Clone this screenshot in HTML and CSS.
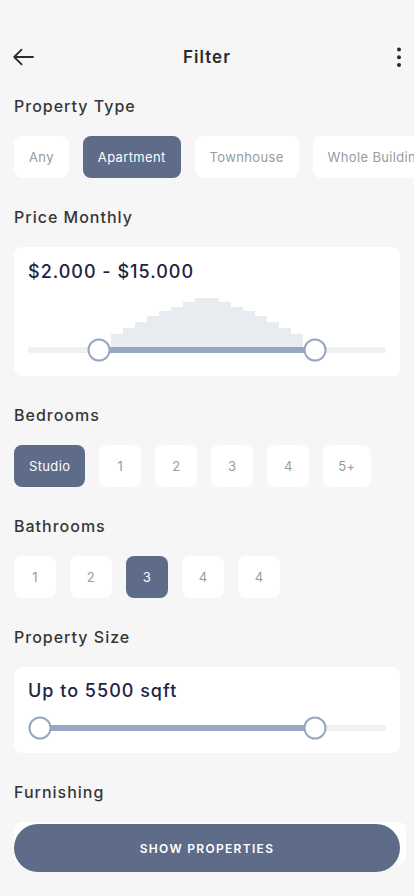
FILE: index.html
```html
<!DOCTYPE html>
<html lang="en">
<head>
<meta charset="utf-8">
<meta name="viewport" content="width=device-width, initial-scale=1">
<title>Filter</title>
<link rel="stylesheet" href="styles.css">
</head>
<body>
<div class="screen">
  <header class="topbar">
    <button class="icon-btn" aria-label="Back">
      <svg width="24" height="24" viewBox="0 0 24 24"><path d="M21 12H2.4M9.6 4.6L2.2 12l7.4 7.4" fill="none" stroke="#2b2b2b" stroke-width="1.8" stroke-linecap="round" stroke-linejoin="round"/></svg>
    </button>
    <h1 class="title">Filter</h1>
    <button class="icon-btn more" aria-label="More">
      <svg width="24" height="24" viewBox="0 0 24 24"><circle cx="21" cy="4.5" r="2" fill="#2b2b2b"/><circle cx="21" cy="12.3" r="2" fill="#2b2b2b"/><circle cx="21" cy="20" r="2" fill="#2b2b2b"/></svg>
    </button>
  </header>

  <main class="content">
    <section class="group">
      <h2 class="label">Property Type</h2>
      <div class="chips chips-scroll">
        <button class="chip">Any</button>
        <button class="chip is-active">Apartment</button>
        <button class="chip">Townhouse</button>
        <button class="chip">Whole Building</button>
      </div>
    </section>

    <section class="group">
      <h2 class="label">Price Monthly</h2>
      <div class="card card-price">
        <div class="value">$2.000 - $15.000</div>
        <div class="histogram">
          <span class="bar" style="height:13px"></span>
          <span class="bar" style="height:19px"></span>
          <span class="bar" style="height:25px"></span>
          <span class="bar" style="height:31px"></span>
          <span class="bar" style="height:36px"></span>
          <span class="bar" style="height:40px"></span>
          <span class="bar" style="height:45px"></span>
          <span class="bar" style="height:49px"></span>
          <span class="bar" style="height:49px"></span>
          <span class="bar" style="height:45px"></span>
          <span class="bar" style="height:40px"></span>
          <span class="bar" style="height:36px"></span>
          <span class="bar" style="height:31px"></span>
          <span class="bar" style="height:25px"></span>
          <span class="bar" style="height:19px"></span>
          <span class="bar" style="height:13px"></span>
        </div>
        <div class="slider">
          <span class="fill" style="left:71px;width:216px"></span>
          <span class="thumb" style="left:71px"></span>
          <span class="thumb" style="left:287px"></span>
        </div>
      </div>
    </section>

    <section class="group">
      <h2 class="label">Bedrooms</h2>
      <div class="chips">
        <button class="chip is-active">Studio</button>
        <button class="chip">1</button>
        <button class="chip">2</button>
        <button class="chip">3</button>
        <button class="chip">4</button>
        <button class="chip">5+</button>
      </div>
    </section>

    <section class="group">
      <h2 class="label">Bathrooms</h2>
      <div class="chips">
        <button class="chip">1</button>
        <button class="chip">2</button>
        <button class="chip is-active">3</button>
        <button class="chip">4</button>
        <button class="chip">4</button>
      </div>
    </section>

    <section class="group">
      <h2 class="label">Property Size</h2>
      <div class="card card-size">
        <div class="value">Up to 5500 sqft</div>
        <div class="slider slider-size">
          <span class="fill" style="left:12px;width:275px"></span>
          <span class="thumb" style="left:12px"></span>
          <span class="thumb" style="left:287px"></span>
        </div>
      </div>
    </section>

    <section class="group">
      <h2 class="label">Furnishing</h2>
      <div class="furnish-card"></div>
    </section>
  </main>

  <div class="footer">
    <button class="cta">SHOW PROPERTIES</button>
  </div>
</div>
</body>
</html>
```

FILE: styles.css
```css
* { box-sizing: border-box; }

html, body {
  margin: 0;
  padding: 0;
  background: #f6f6f6;
  overflow: hidden;
}

body {
  font-family: Inter, "Noto Sans", "Liberation Sans", sans-serif;
  color: #2f2f2f;
  width: 414px;
  height: 896px;
}

.screen {
  position: relative;
  width: 414px;
  height: 896px;
  padding-top: 33px;
  overflow: hidden;
}

.topbar {
  display: grid;
  grid-template-columns: 24px 1fr 24px;
  align-items: center;
  height: 48px;
  padding: 0 12px;
}

.icon-btn {
  width: 24px;
  height: 24px;
  padding: 0;
  border: 0;
  background: none;
  display: flex;
}

.title {
  margin: 0;
  text-align: center;
  font-size: 17px;
  font-weight: 600;
  letter-spacing: 1px;
  color: #2b2b2b;
}

.content {
  margin-top: 15px;
  padding: 0 14px;
}

.group {
  margin-bottom: 29px;
}

.label {
  margin: 0 0 20px;
  font-size: 16px;
  line-height: 20px;
  font-weight: 500;
  letter-spacing: 1px;
  color: #363636;
}

.chips {
  display: flex;
  gap: 14px;
}

.chips-scroll {
  margin-right: -14px;
  overflow: hidden;
  white-space: nowrap;
}

.chip {
  flex-shrink: 0;
  height: 42px;
  min-width: 42px;
  padding: 0 15px;
  border: 0;
  border-radius: 8px;
  background: #ffffff;
  font-family: inherit;
  font-size: 13px;
  letter-spacing: 0.35px;
  color: #9a9a9a;
  white-space: nowrap;
}

.chip.is-active {
  background: #5e6b89;
  color: #ffffff;
  font-weight: 400;
}

.card {
  background: #ffffff;
  border-radius: 8px;
  padding: 13px 14px 23px;
}

.card-size {
  padding: 12px 14px 22px;
}

.value {
  font-size: 18px;
  line-height: 24px;
  font-weight: 500;
  letter-spacing: 1px;
  color: #1d2444;
}

.histogram {
  display: flex;
  align-items: flex-end;
  height: 49px;
  margin: 14px 0 0 83px;
}

.bar {
  width: 12px;
  background: #e8ebf0;
}

.slider {
  position: relative;
  height: 6px;
  border-radius: 3px;
  background: #f0f0f0;
}

.slider-size {
  margin-top: 22px;
}

.fill {
  position: absolute;
  top: 0;
  bottom: 0;
  background: #97a7c3;
}

.thumb {
  position: absolute;
  top: 50%;
  width: 23px;
  height: 23px;
  border-radius: 50%;
  background: #ffffff;
  border: 2px solid #97a7c3;
  transform: translate(-50%, -50%);
}

.furnish-card {
  height: 42px;
  margin-right: -6px;
  border-radius: 8px;
  background: #ffffff;
}

.footer {
  position: absolute;
  left: 14px;
  right: 14px;
  bottom: 24px;
}

.cta {
  width: 100%;
  height: 48px;
  border: 0;
  border-radius: 24px;
  background: #5e6c8a;
  color: #ffffff;
  font-family: inherit;
  font-size: 12px;
  font-weight: 600;
  letter-spacing: 1.3px;
}
```
